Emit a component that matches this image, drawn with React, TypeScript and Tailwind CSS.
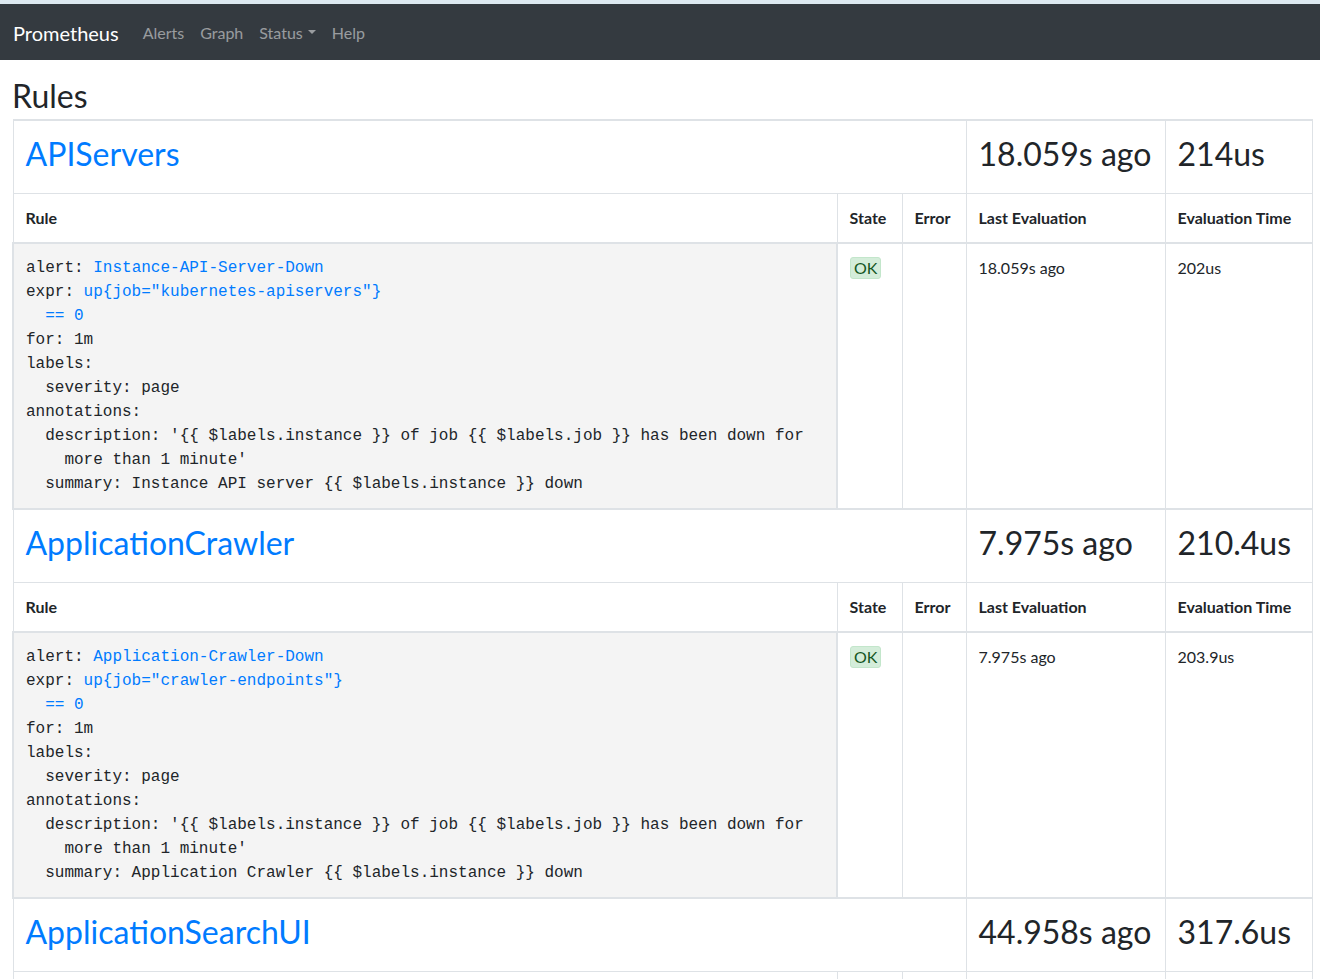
import React from "react";

interface Rule {
  name: string;
  expr: string;
  summary: string;
  lastEval: string;
  evalTime: string;
}

interface Group {
  name: string;
  lastEval: string;
  evalTime: string;
  rules: Rule[];
}

const groups: Group[] = [
  {
    name: "APIServers",
    lastEval: "18.059s ago",
    evalTime: "214us",
    rules: [
      {
        name: "Instance-API-Server-Down",
        expr: 'up{job="kubernetes-apiservers"}\n  == 0',
        summary: "Instance API server {{ $labels.instance }} down",
        lastEval: "18.059s ago",
        evalTime: "202us",
      },
    ],
  },
  {
    name: "ApplicationCrawler",
    lastEval: "7.975s ago",
    evalTime: "210.4us",
    rules: [
      {
        name: "Application-Crawler-Down",
        expr: 'up{job="crawler-endpoints"}\n  == 0',
        summary: "Application Crawler {{ $labels.instance }} down",
        lastEval: "7.975s ago",
        evalTime: "203.9us",
      },
    ],
  },
  {
    name: "ApplicationSearchUI",
    lastEval: "44.958s ago",
    evalTime: "317.6us",
    rules: [
      {
        name: "Application-SearchUI-Down",
        expr: 'up{job="searchui-endpoints"}\n  == 0',
        summary: "Application SearchUI {{ $labels.instance }} down",
        lastEval: "44.958s ago",
        evalTime: "198.2us",
      },
    ],
  },
];

const sans = "font-['Lato','Noto_Sans',sans-serif]";

export default function App() {
  return (
    <div className={`min-h-screen bg-white text-[#212529] ${sans}`}>
      <div className="h-[4px] bg-[#dde9f1]" />
      {/* Navbar */}
      <nav className="flex h-[56px] items-center bg-[#343a40] pl-[13px] pt-[2px]">
        <a href="#" className="mr-[16px] text-[20px] leading-[30px] text-white">
          Prometheus
        </a>
        <div className="flex items-center text-[16px] leading-[24px] text-white/50">
          <a href="#" className="px-[8px]">Alerts</a>
          <a href="#" className="px-[8px]">Graph</a>
          <a href="#" className="flex items-center px-[8px]">
            Status
            <span className="ml-[5px] mt-[-2px] inline-block h-0 w-0 border-x-[4.8px] border-t-[4.8px] border-x-transparent border-t-white/50" />
          </a>
          <a href="#" className="px-[8px]">Help</a>
        </div>
      </nav>

      <div className="pl-[12px] pr-[7px]">
        <h2 className="pt-[17px] pb-[4px] text-[32px] leading-[38px]">Rules</h2>

        <table className="w-full table-fixed border-collapse border border-[#dee2e6]">
          <colgroup>
            <col className="w-[824px]" />
            <col className="w-[65px]" />
            <col className="w-[64px]" />
            <col className="w-[199px]" />
            <col />
          </colgroup>
          {groups.map((g) => (
            <tbody key={g.name} className="border-t-2 border-[#dee2e6]">
              <tr>
                <td colSpan={3} className="border border-[#dee2e6] px-[12px] pt-[14px] pb-[12px] align-top">
                  <h2 className="mb-[8px] text-[32px] leading-[38px]">
                    <a href="#" className="text-[#007bff]">{g.name}</a>
                  </h2>
                </td>
                <td className="border border-[#dee2e6] px-[12px] pt-[14px] pb-[12px] align-top">
                  <h2 className="mb-[8px] text-[32px] leading-[38px]">{g.lastEval}</h2>
                </td>
                <td className="border border-[#dee2e6] px-[12px] pt-[14px] pb-[12px] align-top">
                  <h2 className="mb-[8px] text-[32px] leading-[38px]">{g.evalTime}</h2>
                </td>
              </tr>
              <tr className="text-left text-[16px] font-bold leading-[24px]">
                <th className="border border-b-2 border-[#dee2e6] p-[12px] align-bottom">Rule</th>
                <th className="border border-b-2 border-[#dee2e6] p-[12px] align-bottom">State</th>
                <th className="border border-b-2 border-[#dee2e6] p-[12px] align-bottom">Error</th>
                <th className="border border-b-2 border-[#dee2e6] p-[12px] align-bottom">Last Evaluation</th>
                <th className="border border-b-2 border-[#dee2e6] p-[12px] align-bottom">Evaluation Time</th>
              </tr>
              {g.rules.map((r) => (
                <tr key={r.name} className="text-[16px] leading-[24px]">
                  <td className="border-2 border-[#dee2e6] bg-[#f4f4f4] p-[12px] align-top">
                    <pre className="font-['Liberation_Mono','Courier_New',monospace] text-[16px] leading-[24px] text-[#212529]">
                      {"alert: "}
                      <a href="#" className="text-[#007bff]">{r.name}</a>
                      {"\nexpr: "}
                      <a href="#" className="text-[#007bff]">{r.expr}</a>
                      {"\nfor: 1m\nlabels:\n  severity: page\nannotations:\n  description: '{{ $labels.instance }} of job {{ $labels.job }} has been down for\n    more than 1 minute'\n  summary: " +
                        r.summary}
                    </pre>
                  </td>
                  <td className="border border-[#dee2e6] p-[12px] align-top">
                    <span className="inline-block rounded-[3px] border border-[#c3e6cb] bg-[#d4edda] px-[3px] leading-[20px] text-[#155724]">
                      OK
                    </span>
                  </td>
                  <td className="border border-[#dee2e6] p-[12px] align-top" />
                  <td className="border border-[#dee2e6] p-[12px] align-top">{r.lastEval}</td>
                  <td className="border border-[#dee2e6] p-[12px] align-top">{r.evalTime}</td>
                </tr>
              ))}
            </tbody>
          ))}
        </table>
      </div>
    </div>
  );
}
